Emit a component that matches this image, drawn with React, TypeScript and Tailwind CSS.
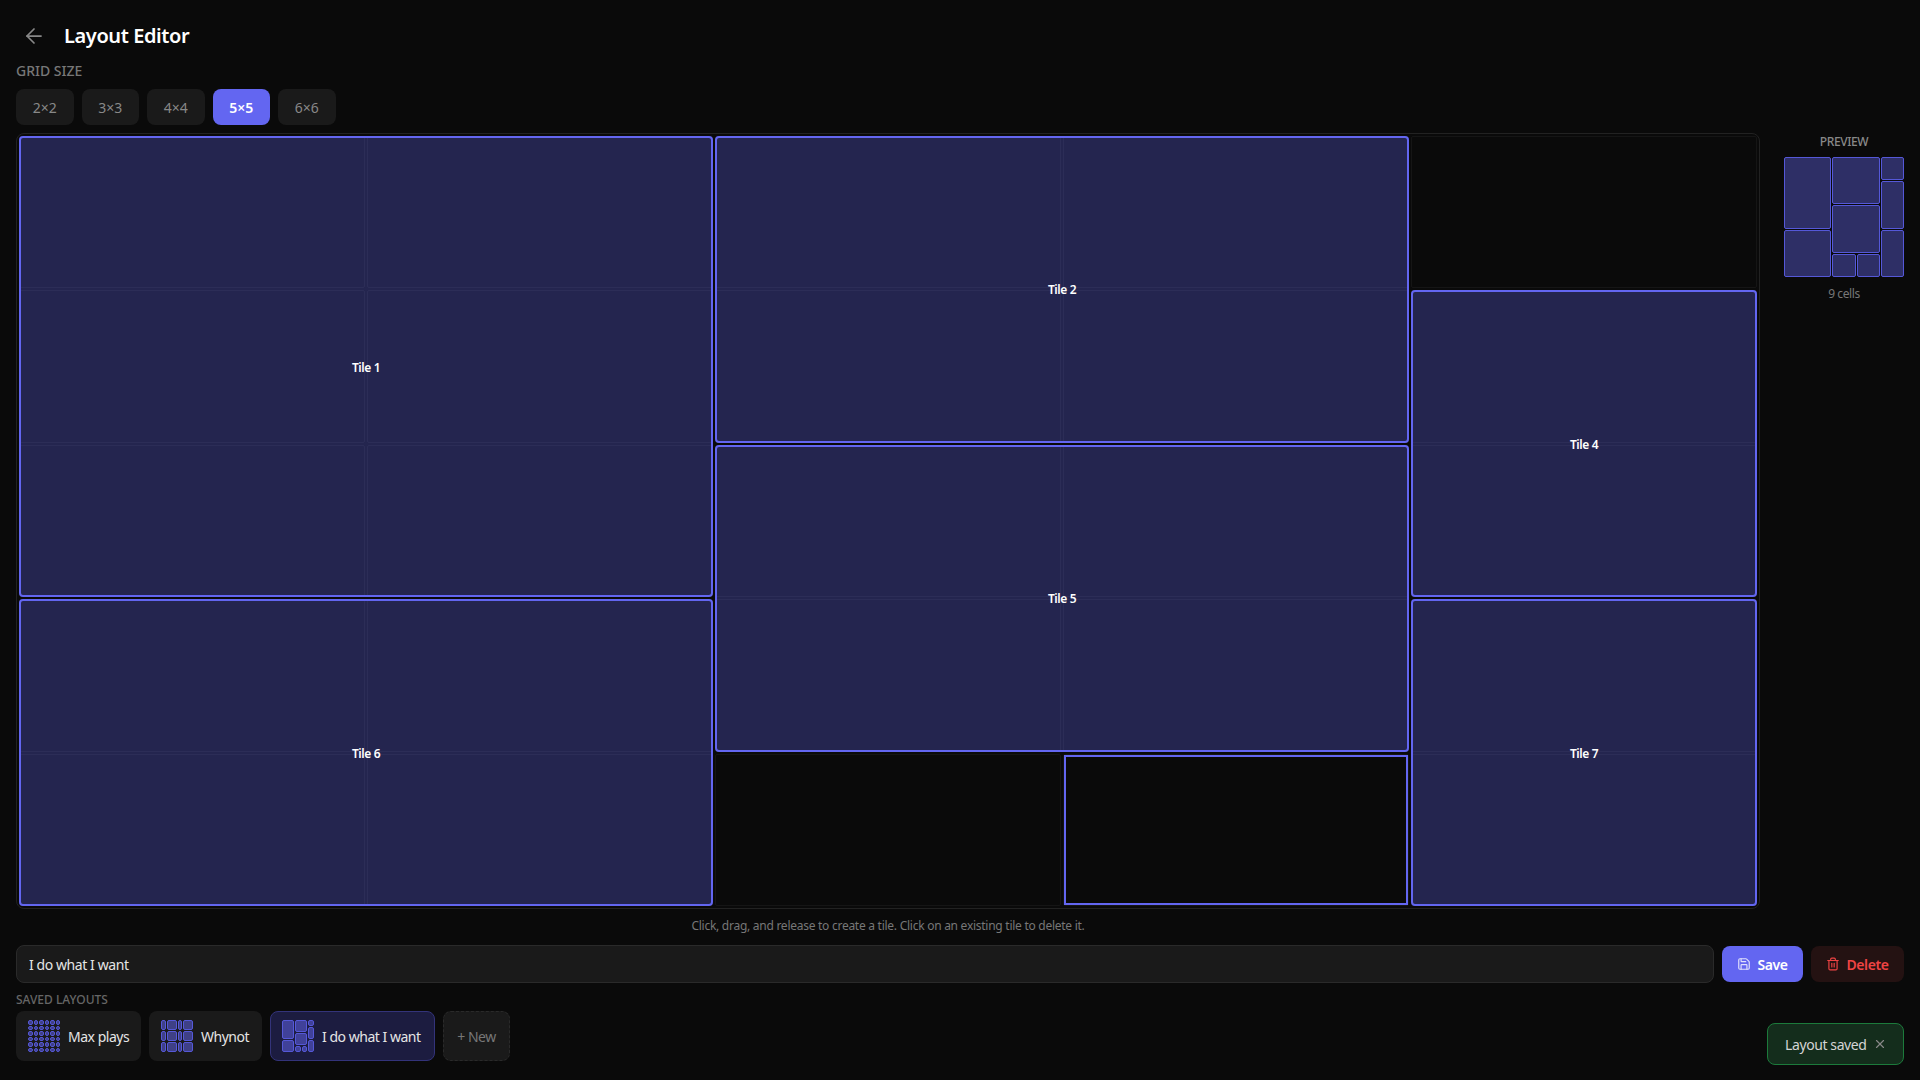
import { ArrowLeft, Save, Trash2, X } from "lucide-react";

const FONT = "font-['Noto_Sans','Open_Sans',sans-serif]";

const gridSizes = ["2×2", "3×3", "4×4", "5×5", "6×6"];

const tiles = [
  { name: "Tile 1", pos: "col-start-1 col-span-2 row-start-1 row-span-3" },
  { name: "Tile 2", pos: "col-start-3 col-span-2 row-start-1 row-span-2" },
  { name: "Tile 4", pos: "col-start-5 col-span-1 row-start-2 row-span-2" },
  { name: "Tile 5", pos: "col-start-3 col-span-2 row-start-3 row-span-2" },
  { name: "Tile 6", pos: "col-start-1 col-span-2 row-start-4 row-span-2" },
  { name: "Tile 7", pos: "col-start-5 col-span-1 row-start-4 row-span-2" },
];

const customLayout = [
  "col-start-1 col-span-2 row-start-1 row-span-3",
  "col-start-3 col-span-2 row-start-1 row-span-2",
  "col-start-5 col-span-1 row-start-1 row-span-1",
  "col-start-5 col-span-1 row-start-2 row-span-2",
  "col-start-3 col-span-2 row-start-3 row-span-2",
  "col-start-1 col-span-2 row-start-4 row-span-2",
  "col-start-5 col-span-1 row-start-4 row-span-2",
  "col-start-3 col-span-1 row-start-5 row-span-1",
  "col-start-4 col-span-1 row-start-5 row-span-1",
];

const whynotLayout = [
  "col-span-1 row-span-2",
  "col-span-2 row-span-2",
  "col-span-1 row-span-2",
  "col-span-2 row-span-2",
  "col-span-1 row-span-2",
  "col-span-2 row-span-2",
  "col-span-1 row-span-2",
  "col-span-2 row-span-2",
  "col-span-1 row-span-2",
  "col-span-2 row-span-2",
  "col-span-1 row-span-2",
  "col-span-2 row-span-2",
];

const maxLayout = Array.from({ length: 36 }, () => "");

function Thumb({ cells, six }: { cells: string[]; six?: boolean }) {
  return (
    <div
      className={`grid h-8 w-8 shrink-0 gap-px ${
        six ? "grid-cols-6 grid-rows-6" : "grid-cols-5 grid-rows-5"
      }`}
    >
      {cells.map((c, i) => (
        <div key={i} className={`${c} rounded-[2px] border border-[#5558d8] bg-[#6366f1]/50`} />
      ))}
    </div>
  );
}

export default function App() {
  return (
    <div className={`${FONT} relative flex h-[1080px] w-[1920px] flex-col overflow-hidden bg-[#0a0a0a] px-4 tracking-[-0.025em] text-[#e5e5e5]`}>
      <header className="flex h-[70px] shrink-0 items-center gap-[18px] pl-[6px] pt-[1px]">
        <ArrowLeft size={24} strokeWidth={1.75} className="text-[#888888]" />
        <h1 className="text-[20px] leading-7 font-semibold text-white">Layout Editor</h1>
      </header>

      <div className="-mt-[6px] text-[14px] leading-[14px] font-medium tracking-normal text-[#777777] uppercase">Grid size</div>

      <div className="mt-[11px] flex gap-2">
        {gridSizes.map((s) => (
          <button
            key={s}
            className={`h-9 w-[57.5px] rounded-lg text-[14px] tracking-normal ${
              s === "5×5" ? "bg-[#6366f1] font-semibold text-white" : "bg-[#1a1a1a] text-[#888888]"
            }`}
          >
            {s}
          </button>
        ))}
      </div>

      <div className="mt-2 flex gap-6">
        <div className="h-[776px] w-[1744px] rounded-lg border border-[#222222] p-[2px]">
          <div className="grid h-full w-full grid-cols-5 grid-rows-5 gap-[2px]">
            {Array.from({ length: 25 }, (_, i) => (
              <div
                key={i}
                style={{ gridColumnStart: (i % 5) + 1, gridRowStart: Math.floor(i / 5) + 1 }}
                className="rounded-[2px] border border-[#151515]"
              />
            ))}
            {tiles.map((t) => (
              <div
                key={t.name}
                className={`${t.pos} flex items-center justify-center rounded-[4px] border-2 border-[#6366f1] bg-[#6366f1]/30 pt-[2px] text-[12px] font-semibold text-white`}
              >
                {t.name}
              </div>
            ))}
            <div className="col-start-4 row-start-5 m-px border-2 border-[#6366f1] bg-[#0a0a0a]" />
          </div>
        </div>

        <aside className="flex w-[120px] shrink-0 flex-col items-center">
          <div className="mt-[1px] text-[12px] leading-4 font-medium text-[#888888] uppercase">Preview</div>
          <div className="mt-[7px] grid h-[120px] w-[120px] grid-cols-5 grid-rows-5 gap-px">
            {customLayout.map((c, i) => (
              <div key={i} className={`${c} rounded-[2px] border border-[#5558d8] bg-[#6366f1]/40`} />
            ))}
          </div>
          <div className="mt-[9px] text-[12px] leading-4 text-[#777777]">9 cells</div>
        </aside>
      </div>

      <p className="mt-[9px] w-[1744px] text-center text-[12px] leading-4 tracking-[-0.022em] text-[#777777]">
        Click, drag, and release to create a tile. Click on an existing tile to delete it.
      </p>

      <div className="mt-[11px] flex items-center gap-2">
        <input
          readOnly
          value="I do what I want"
          className="h-[38px] min-w-0 flex-1 rounded-lg border border-[#2a2a2a] bg-[#1a1a1a] px-3 text-[14px] tracking-[-0.03em] text-[#e5e5e5] outline-none"
        />
        <button className="flex h-9 w-[81px] items-center justify-center gap-[6px] rounded-lg bg-[#6366f1] text-[14px] font-semibold text-white">
          <Save size={14} className="opacity-80" />
          Save
        </button>
        <button className="flex h-9 w-[93px] items-center justify-center gap-[6px] rounded-lg bg-[#241212] text-[14px] font-semibold text-[#ef4444]">
          <Trash2 size={14} />
          Delete
        </button>
      </div>

      <div className="mt-[9px] text-[12px] leading-4 font-medium tracking-normal text-[#666666] uppercase">Saved layouts</div>

      <div className="mt-[3px] flex gap-2 tracking-[-0.03em]">
        <button className="flex h-[50px] w-[125px] items-center gap-2 rounded-lg border border-transparent bg-[#1a1a1a] pl-[11px] text-[14px] text-[#e5e5e5]">
          <Thumb cells={maxLayout} six />
          Max plays
        </button>
        <button className="flex h-[50px] w-[113px] items-center gap-2 rounded-lg border border-transparent bg-[#1a1a1a] pl-[11px] text-[14px] text-[#e5e5e5]">
          <Thumb cells={whynotLayout} six />
          Whynot
        </button>
        <button className="flex h-[50px] w-[165px] items-center gap-2 rounded-lg border border-[#33337a] bg-[#1c1c40] pl-[11px] text-[14px] text-[#e5e5e5]">
          <Thumb cells={customLayout} />
          I do what I want
        </button>
        <button className="h-[50px] w-[67px] rounded-lg border border-dashed border-[#2a2a2a] bg-[#1a1a1a] text-[14px] text-[#777777]">
          + New
        </button>
      </div>

      <div className="absolute right-4 bottom-[15px] flex h-[42px] w-[137px] items-center gap-[6px] rounded-lg border border-[#1c7a3b] bg-[#142d1c] pl-[17px] text-[14px] text-[#d4d4d4]">
        Layout saved
        <X size={14} className="text-[#888888]" />
      </div>
    </div>
  );
}
